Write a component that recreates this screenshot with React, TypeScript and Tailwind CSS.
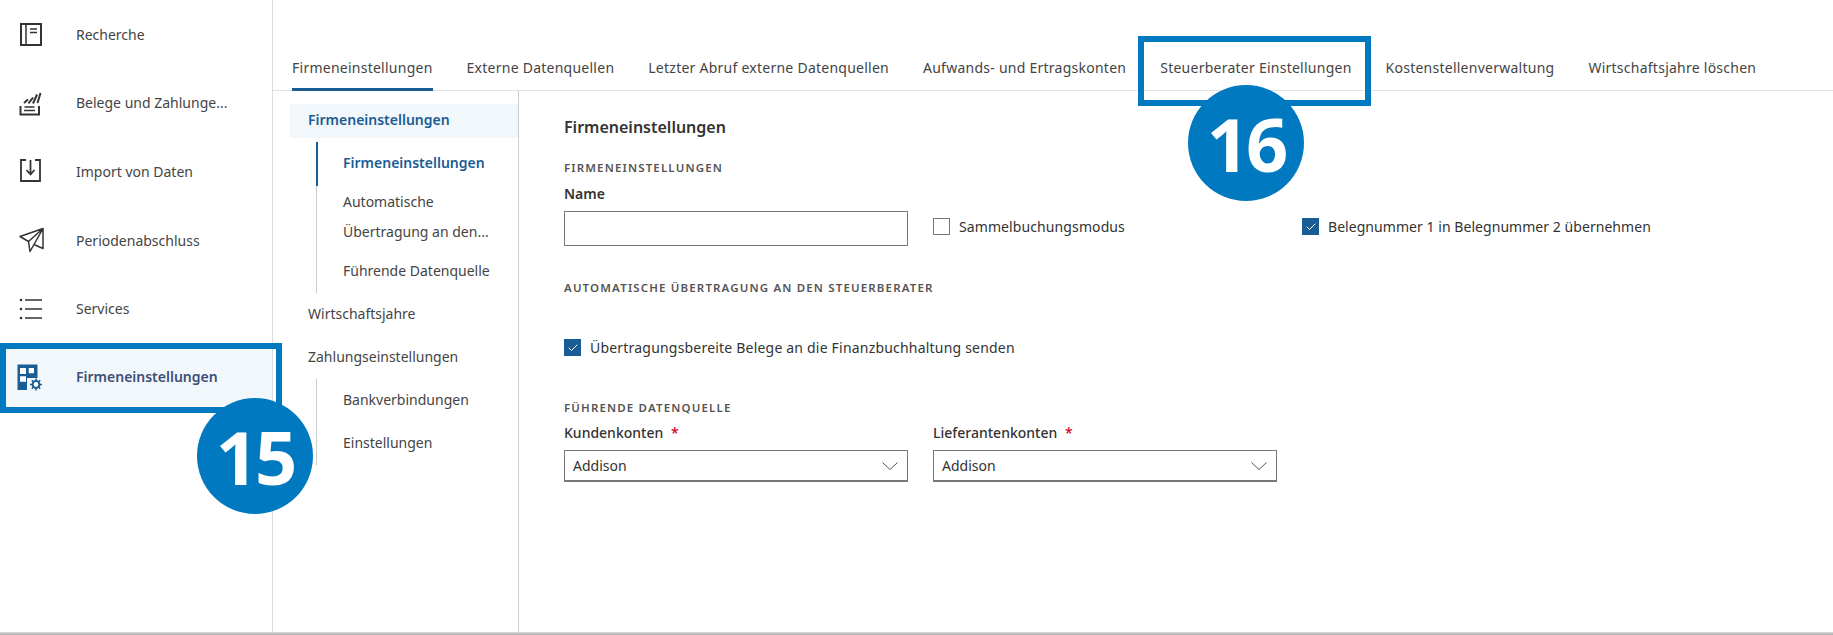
import { Check } from "lucide-react";

const RechercheIcon = () => (
  <svg width="24" height="24" viewBox="0 0 24 24" fill="none" stroke="#333" strokeWidth="2">
    <rect x="2" y="2" width="20" height="21" />
    <path d="M7 2v21M11 7h7M11 10.5h7" strokeWidth="1.5" />
  </svg>
);

const BelegeIcon = () => (
  <svg width="24" height="26" viewBox="0 0 24 26" fill="none" stroke="#333" strokeWidth="2">
    <path d="M1.500 16v8.500h18.500V16" strokeWidth="2" />
    <path d="M5 20.500h11M5.500 17h10" strokeWidth="1.500" />
    <path d="M5 13l4-3.500M9.500 13.500l4.500-6M14 13.500l4-9M18.500 13l3-10" />
  </svg>
);

const ImportIcon = () => (
  <svg width="24" height="26" viewBox="0 0 24 26" fill="none" stroke="#333" strokeWidth="1.8">
    <path d="M7 2H2v21h19V2h-5" />
    <path d="M11.500 2v13M7.500 12l4 4.500 4-4.500" />
  </svg>
);

const PlaneIcon = () => (
  <svg width="26" height="26" viewBox="0 0 26 26" fill="none" stroke="#333" strokeWidth="1.5" strokeLinejoin="round">
    <path d="M24 1.500 1 9.500l8.500 5L24 1.500v20l-9-4-4 7-1.500-10M24 1.500l-9 16" />
  </svg>
);

const ListIcon = () => (
  <svg width="24" height="24" viewBox="0 0 24 24" fill="none" stroke="#333" strokeWidth="1.4">
    <path d="M6 3h17M6 12h17M6 21h17" />
    <circle cx="2" cy="3" r="1.300" fill="#333" stroke="none" />
    <circle cx="2" cy="12" r="1.300" fill="#333" stroke="none" />
    <circle cx="2" cy="21" r="1.300" fill="#333" stroke="none" />
  </svg>
);

const BuildingIcon = () => (
  <svg width="28" height="28" viewBox="0 0 28 28">
    <path d="M0.500 1.500h20v13.500H10v12H0.500z" fill="#1a5c94" />
    <path d="M3 5h6v6H3zM11.700 5H17v5.300h-5.300zM3 13.300h6v5.500H3z" fill="#fff" />
    <circle cx="19" cy="21.500" r="3.400" fill="#fff" stroke="#1a5c94" strokeWidth="2" />
    <path d="M19 15.500v2.500M19 25v2.500M13 21.500h2.500M22.500 21.500H25M14.800 17.300l1.800 1.800M21.400 23.900l1.800 1.800M14.800 25.700l1.800-1.800M21.400 19.100l1.800-1.800" stroke="#1a5c94" strokeWidth="1.500" />
  </svg>
);

const navItems = [
  { label: "Recherche", icon: <RechercheIcon /> },
  { label: "Belege und Zahlunge...", icon: <BelegeIcon /> },
  { label: "Import von Daten", icon: <ImportIcon /> },
  { label: "Periodenabschluss", icon: <PlaneIcon /> },
  { label: "Services", icon: <ListIcon /> },
];

const tabs = [
  "Firmeneinstellungen",
  "Externe Datenquellen",
  "Letzter Abruf externe Datenquellen",
  "Aufwands- und Ertragskonten",
  "Steuerberater Einstellungen",
  "Kostenstellenverwaltung",
  "Wirtschaftsjahre löschen",
];

const CheckBox = ({ checked }: { checked?: boolean }) =>
  checked ? (
    <span className="flex h-[17px] w-[17px] shrink-0 items-center justify-center bg-[#1a5c94]">
      <Check className="h-3 w-3 text-white" strokeWidth={2} />
    </span>
  ) : (
    <span className="h-[17px] w-[17px] shrink-0 border border-[#777] bg-white" />
  );

const SelectBox = ({ label }: { label: string }) => (
  <div className="w-[344px]">
    <div className="h-[24px] text-[14px] leading-[24px] font-medium text-[#333]">
      {label} <span className="ml-1 text-[#d9001b]">*</span>
    </div>
    <div className="mt-[5px] flex h-[32px] items-center justify-between border border-b-2 border-[#777] pr-[9px] pl-[8px] text-[14px] text-[#333]">
      Addison
      <svg width="16" height="8" viewBox="0 0 16 8" fill="none" stroke="#555" strokeWidth="1">
        <path d="M0.500 0.500 8 7.500l7.500-7" />
      </svg>
    </div>
  </div>
);

const SectionLabel = ({ children }: { children: string }) => (
  <div className="text-[11.500px] leading-[16px] font-semibold tracking-[1.150px] text-[#555] uppercase">{children}</div>
);

const App = () => {
  return (
    <div className="relative flex h-[635px] w-[1833px] overflow-hidden bg-white font-['Noto_Sans',sans-serif] text-[14px]">
      {/* linke Navigation */}
      <aside className="h-full w-[273px] shrink-0 border-r border-[#ddd]">
        {navItems.map((item) => (
          <div key={item.label} className="flex h-[68.600px] items-center pl-[19px] text-[#444]">
            <span className="flex w-[57px] shrink-0">{item.icon}</span>
            <span>{item.label}</span>
          </div>
        ))}
        <div className="flex h-[68px] items-center bg-[#f2f7fb] pl-[17px] font-semibold text-[#3b4f78]">
          <span className="flex w-[59px] shrink-0">
            <BuildingIcon />
          </span>
          <span>Firmeneinstellungen</span>
        </div>
      </aside>

      <main className="flex min-w-0 flex-1 flex-col">
        {/* Tabs */}
        <div className="flex h-[91px] shrink-0 items-end gap-[34px] border-b border-[#e2e2e2] pl-[19px] tracking-[0.250px]">
          {tabs.map((tab, i) => (
            <div
              key={tab}
              className={
                i === 0
                  ? "-mb-px flex h-[46px] items-start border-b-[3px] border-[#1a5c94] pt-[12px] text-[#444]"
                  : "-mb-px flex h-[46px] items-start pt-[12px] text-[#444]"
              }
            >
              {tab}
            </div>
          ))}
        </div>

        <div className="flex min-h-0 flex-1">
          {/* Unternavigation */}
          <div className="h-full w-[246px] shrink-0 border-r border-[#ccc] pt-[13px] pl-[17px] text-[#444]">
            <div className="flex h-[34px] items-center bg-[#f2f7fb] pb-[3px] pl-[18px] font-semibold text-[#1a5c94]">Firmeneinstellungen</div>
            <div className="mt-[4px] ml-[26px] border-l border-[#ccc]">
              <div className="-ml-px flex h-[44px] items-center border-l-2 border-[#1a5c94] pb-[3px] pl-[25px] font-semibold text-[#1a5c94]">
                Firmeneinstellungen
              </div>
              <div className="py-[1px] pl-[26px] leading-[30px]">
                Automatische
                <br />
                Übertragung an den...
              </div>
              <div className="flex h-[45px] items-center pl-[26px]">Führende Datenquelle</div>
            </div>
            <div className="flex h-[43px] items-center pb-[2px] pl-[18px]">Wirtschaftsjahre</div>
            <div className="flex h-[43px] items-center pb-[3px] pl-[18px]">Zahlungseinstellungen</div>
            <div className="ml-[26px] border-l border-[#ccc] pl-[26px]">
              <div className="flex h-[43px] items-center pb-[2px]">Bankverbindungen</div>
              <div className="flex h-[43px] items-center pb-[2px]">Einstellungen</div>
            </div>
          </div>

          {/* Formular */}
          <div className="min-w-0 flex-1 pt-[24px] pl-[45px] text-[#333]">
            <div className="text-[16px] leading-[24px] font-semibold">Firmeneinstellungen</div>
            <div className="mt-[21px]">
              <SectionLabel>Firmeneinstellungen</SectionLabel>
            </div>
            <div className="mt-[8px] text-[14px] leading-[20px] font-semibold">Name</div>
            <div className="mt-[7px] flex items-center">
              <div className="h-[35px] w-[344px] border border-[#777]" />
              <div className="mb-[4px] ml-[25px] flex w-[369px] items-center gap-[9px] tracking-[0.100px]">
                <CheckBox />
                <span>Sammelbuchungsmodus</span>
              </div>
              <div className="mb-[4px] flex items-center gap-[9px] tracking-[0.050px]">
                <CheckBox checked />
                <span>Belegnummer 1 in Belegnummer 2 übernehmen</span>
              </div>
            </div>
            <div className="mt-[34px]">
              <SectionLabel>Automatische Übertragung an den Steuerberater</SectionLabel>
            </div>
            <div className="mt-[41px] flex items-center gap-[9px] tracking-[0.200px]">
              <CheckBox checked />
              <span>Übertragungsbereite Belege an die Finanzbuchhaltung senden</span>
            </div>
            <div className="mt-[42px]">
              <SectionLabel>Führende Datenquelle</SectionLabel>
            </div>
            <div className="mt-[5px] flex gap-[25px]">
              <SelectBox label="Kundenkonten" />
              <SelectBox label="Lieferantenkonten" />
            </div>
          </div>
        </div>
      </main>

      {/* Markierungen */}
      <div className="absolute top-[343px] left-0 h-[70px] w-[282px] border-[6px] border-[#0079c1]" />
      <div className="absolute top-[36px] left-[1138px] h-[70px] w-[233px] border-[6px] border-[#0079c1]" />
      <div className="absolute top-[398px] left-[197px] flex h-[116px] w-[116px] items-center justify-center rounded-full bg-[#0079c1] font-['Open_Sans',sans-serif] text-[74px] font-bold tracking-[-3px] text-white">
        15
      </div>
      <div className="absolute top-[85px] left-[1188px] flex h-[116px] w-[116px] items-center justify-center rounded-full bg-[#0079c1] font-['Open_Sans',sans-serif] text-[74px] font-bold tracking-[-3px] text-white">
        16
      </div>
      <div className="absolute right-0 bottom-0 left-0 h-[3px] bg-gradient-to-b from-[#ddd] to-[#aaa]" />
    </div>
  );
};

export default App;
